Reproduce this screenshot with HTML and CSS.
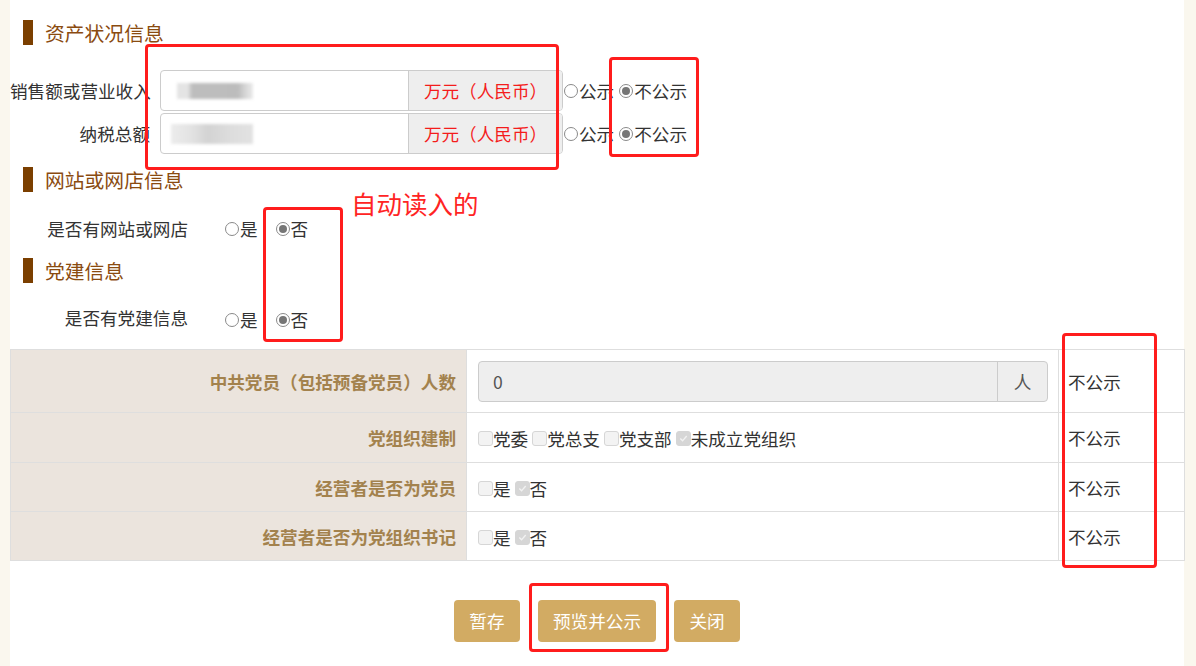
FILE: index.html
```html
<!DOCTYPE html>
<html lang="zh-CN">
<head>
<meta charset="utf-8">
<title>资产状况信息</title>
<link rel="stylesheet" href="styles.css">
</head>
<body>
<div class="page">
  <div class="sec-title">资产状况信息</div>
  <div class="money-row">
    <div class="lbl">销售额或营业收入</div>
    <div class="igroup">
      <div class="field"><span class="blur blur-a"></span></div>
      <div class="addon">万元（人民币）</div>
    </div>
    <span class="radio"><span class="circle"></span>公示</span>
    <span class="radio gap"><span class="circle on"></span>不公示</span>
  </div>
  <div class="money-row">
    <div class="lbl">纳税总额</div>
    <div class="igroup">
      <div class="field"><span class="blur blur-b"></span></div>
      <div class="addon">万元（人民币）</div>
    </div>
    <span class="radio"><span class="circle"></span>公示</span>
    <span class="radio gap"><span class="circle on"></span>不公示</span>
  </div>

  <div class="sec-title s2">网站或网店信息</div>
  <div class="yn-row r1">
    <div class="lbl">是否有网站或网店</div>
    <span class="radio yes"><span class="circle"></span>是</span>
    <span class="radio"><span class="circle on"></span>否</span>
  </div>

  <div class="sec-title s3">党建信息</div>
  <div class="yn-row r2">
    <div class="lbl up">是否有党建信息</div>
    <span class="radio yes"><span class="circle"></span>是</span>
    <span class="radio"><span class="circle on"></span>否</span>
  </div>

  <table class="tbl">
    <tr class="h63">
      <td class="th">中共党员（包括预备党员）人数</td>
      <td class="cell">
        <div class="igroup2">
          <div class="val">0</div>
          <div class="unit">人</div>
        </div>
      </td>
      <td class="pub">不公示</td>
    </tr>
    <tr class="h50">
      <td class="th">党组织建制</td>
      <td class="cell"><span class="cb"><span class="box"></span>党委</span> <span class="cb"><span class="box"></span>党总支</span> <span class="cb"><span class="box"></span>党支部</span> <span class="cb"><span class="box on"><svg viewBox="0 0 15 15"><path d="M3.8 7.6 L6.4 10.2 L11.2 4.6" fill="none" stroke="#f2f2f2" stroke-width="1.6"/></svg></span>未成立党组织</span></td>
      <td class="pub">不公示</td>
    </tr>
    <tr class="h49">
      <td class="th">经营者是否为党员</td>
      <td class="cell"><span class="cb"><span class="box"></span>是</span> <span class="cb"><span class="box on"><svg viewBox="0 0 15 15"><path d="M3.8 7.6 L6.4 10.2 L11.2 4.6" fill="none" stroke="#f2f2f2" stroke-width="1.6"/></svg></span>否</span></td>
      <td class="pub">不公示</td>
    </tr>
    <tr class="h49">
      <td class="th">经营者是否为党组织书记</td>
      <td class="cell"><span class="cb"><span class="box"></span>是</span> <span class="cb"><span class="box on"><svg viewBox="0 0 15 15"><path d="M3.8 7.6 L6.4 10.2 L11.2 4.6" fill="none" stroke="#f2f2f2" stroke-width="1.6"/></svg></span>否</span></td>
      <td class="pub">不公示</td>
    </tr>
  </table>

  <div class="btns">
    <button class="btn">暂存</button>
    <button class="btn">预览并公示</button>
    <button class="btn">关闭</button>
  </div>
</div>

<div class="mark m1"></div>
<div class="mark m2"></div>
<div class="mark m3"></div>
<div class="mark m4"></div>
<div class="mark m5"></div>
<div class="note">自动读入的</div>
</body>
</html>
```

FILE: styles.css
```css
html, body {
  margin: 0;
  padding: 0;
}
body {
  background: #faf7ee;
  font-family: "Noto Sans CJK SC", "Noto Sans", sans-serif;
  font-size: 17.6px;
  color: #333;
  position: relative;
  width: 1196px;
  height: 666px;
  overflow: hidden;
}
.page {
  margin-left: 10px;
  width: 1174px;
  height: 666px;
  background: #fff;
  padding-top: 20px;
  box-sizing: border-box;
}
.sec-title {
  margin-left: 13px;
  border-left: 10px solid #7b3f00;
  height: 25px;
  line-height: 25px;
  padding-left: 12px;
  font-size: 19.8px;
  color: #8a4b10;
}
.money-row {
  display: flex;
  align-items: center;
  height: 41px;
  margin-top: 2px;
}
.sec-title + .money-row {
  margin-top: 25px;
}
.lbl {
  text-align: right;
  line-height: 20px;
  white-space: nowrap;
}
.money-row .lbl {
  width: 140px;
  margin-right: 10px;
}
.igroup {
  display: flex;
  width: 403px;
  height: 41px;
  border: 1px solid #ccc;
  border-radius: 4px;
  box-sizing: border-box;
  overflow: hidden;
}
.field {
  flex: 1;
  display: flex;
  align-items: center;
}
.blur {
  display: block;
  filter: blur(1.4px);
}
.blur-a {
  margin-left: 16px;
  width: 76px;
  height: 16px;
  background: linear-gradient(90deg, #e4e4e4 0, #e4e4e4 14%, #bdbdbd 20%, #bcbcbc 80%, #d6d6d6 90%, #ebebeb 100%);
}
.blur-b {
  margin-left: 10px;
  width: 82px;
  height: 20px;
  background: linear-gradient(90deg, #ececec 0, #e2e2e2 25%, #d3d3d3 45%, #dcdcdc 70%, #e2e2e2 100%);
}
.addon {
  width: 153px;
  background: #eee;
  border-left: 1px solid #ccc;
  color: #f41c1c;
  display: flex;
  align-items: center;
  justify-content: center;
}
.radio {
  display: inline-flex;
  align-items: center;
  line-height: 20px;
  white-space: nowrap;
}
.money-row .radio {
  margin-left: 1px;
}
.money-row .radio.gap {
  margin-left: 5px;
}
.circle {
  width: 14px;
  height: 14px;
  border: 1px solid #8a8a8a;
  border-radius: 50%;
  box-sizing: border-box;
  margin-right: 1px;
  display: flex;
  align-items: center;
  justify-content: center;
  background: #fff;
}
.circle.on::after {
  content: "";
  width: 8px;
  height: 8px;
  border-radius: 50%;
  background: #767676;
}
.s2 {
  margin-top: 13px;
}
.s3 {
  margin-top: 14px;
}
.yn-row {
  display: flex;
  align-items: center;
  height: 30px;
}
.yn-row.r1 {
  margin-top: 22px;
}
.yn-row.r2 {
  margin-top: 22px;
}
.yn-row .lbl {
  width: 178px;
  margin-right: 37px;
}
.yn-row .lbl.up {
  position: relative;
  top: -2px;
}
.yn-row .radio.yes {
  margin-right: 18px;
}
.tbl {
  width: 1174px;
  border-collapse: collapse;
  margin-top: 14px;
  table-layout: fixed;
}
.tbl td {
  border: 1px solid #dedede;
  padding: 0;
  vertical-align: middle;
}
.tbl tr.h63 td { height: 63px; }
.tbl tr.h50 td { height: 50px; }
.tbl tr.h49 td { height: 49px; }
.th {
  width: 456px;
  background: #ebe4dd;
  color: #a3824d;
  font-weight: bold;
  text-align: right;
  padding-right: 10px !important;
  box-sizing: border-box;
}
.cell {
  width: 592px;
  padding-left: 11px !important;
  padding-right: 10px !important;
  box-sizing: border-box;
}
.pub {
  width: 126px;
  padding-left: 9px !important;
  box-sizing: border-box;
}
.igroup2 {
  display: flex;
  height: 41px;
  border: 1px solid #ccc;
  border-radius: 4px;
  background: #eee;
  box-sizing: border-box;
  color: #555;
}
.val {
  flex: 1;
  display: flex;
  align-items: center;
  padding-left: 14px;
}
.unit {
  width: 49px;
  border-left: 1px solid #ccc;
  display: flex;
  align-items: center;
  justify-content: center;
}
.cb {
  display: inline-flex;
  align-items: center;
  vertical-align: middle;
}
.box {
  width: 15px;
  height: 15px;
  border: 1px solid #d6d6d6;
  background: #f3f3f3;
  border-radius: 3px;
  box-sizing: border-box;
  display: flex;
}
.box.on {
  background: #d6d6d6;
  border-color: #d6d6d6;
}
.box svg {
  width: 13px;
  height: 13px;
}
.btns {
  display: flex;
  justify-content: center;
  gap: 17.5px;
  margin-top: 39px;
}
.btn {
  height: 42px;
  padding: 0 15.5px;
  border: none;
  border-radius: 4px;
  background: #d2ab63;
  color: #fff;
  font-family: "Noto Sans CJK SC", "Noto Sans", sans-serif;
  font-size: 17.6px;
  line-height: 42px;
}
.mark {
  position: absolute;
  border: 3px solid #ff1c1c;
  border-radius: 4px;
  box-sizing: border-box;
}
.m1 { left: 145px; top: 44px; width: 414px; height: 126px; }
.m2 { left: 609px; top: 57px; width: 90px; height: 100px; }
.m3 { left: 263px; top: 207px; width: 80px; height: 135px; }
.m4 { left: 1062px; top: 333px; width: 95px; height: 235px; }
.m5 { left: 529px; top: 583px; width: 140px; height: 69px; }
.note {
  position: absolute;
  left: 351px;
  top: 187px;
  font-size: 25.5px;
  line-height: 32px;
  color: #ff2424;
  white-space: nowrap;
}
```
